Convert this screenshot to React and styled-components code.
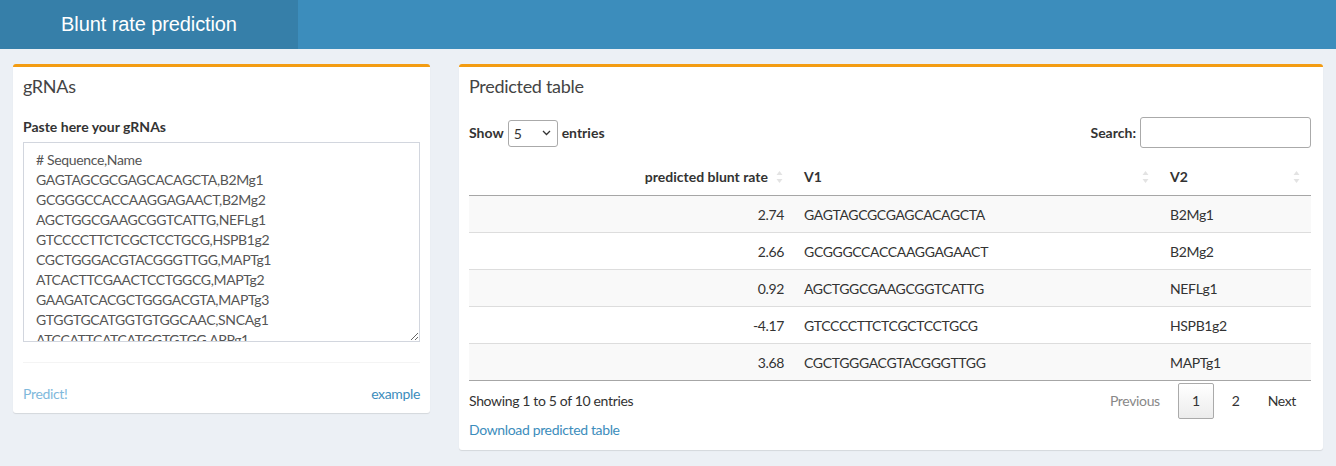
import React from 'react';
import styled, { createGlobalStyle } from 'styled-components';

const GlobalStyle = createGlobalStyle`
  html, body {
    margin: 0;
    padding: 0;
    background: #ecf0f5;
  }
  body {
    font-family: Lato, "Liberation Sans", sans-serif;
    font-size: 14px;
    letter-spacing: -0.35px;
    color: #333;
  }
  * {
    box-sizing: border-box;
  }
`;

const Page = styled.div`
  width: 1336px;
  min-height: 466px;
  background: #ecf0f5;
`;

const Header = styled.header`
  display: flex;
  height: 49px;
  background: #3c8dbc;
`;

const Logo = styled.div`
  width: 298px;
  background: #367fa9;
  color: #fff;
  font-family: "Liberation Sans", Arial, sans-serif;
  font-size: 20px;
  letter-spacing: -0.1px;
  line-height: 49px;
  text-align: center;
`;

const Content = styled.main`
  display: grid;
  grid-template-columns: 417px 1fr;
  gap: 29px;
  align-items: start;
  padding: 15px 13px;
`;

const Box = styled.section`
  background: #fff;
  border-top: 3px solid #f39c12;
  border-radius: 3px;
  box-shadow: 0 1px 1px rgba(0, 0, 0, 0.1);
`;

const BoxHeader = styled.div`
  padding: 10px;
`;

const BoxTitle = styled.h3`
  margin: 0;
  font-size: 18px;
  font-weight: 400;
  line-height: 19px;
  letter-spacing: -0.3px;
  color: #444;
`;

const BoxBody = styled.div`
  padding: 11px ${(p) => p.$right || 10}px ${(p) => p.$bottom ?? 10}px 10px;
`;

const Label = styled.label`
  display: block;
  font-weight: 700;
  letter-spacing: 0;
  line-height: 20px;
  margin-bottom: 5px;
`;

const TextArea = styled.textarea`
  display: block;
  width: 100%;
  height: 200px;
  padding: 7px 12px 6px;
  border: 1px solid #d2d6de;
  border-radius: 0;
  font-family: Lato, "Liberation Sans", sans-serif;
  font-size: 14px;
  letter-spacing: -0.35px;
  line-height: 20px;
  color: #555;
  overflow: hidden;
  resize: vertical;
  outline: none;
`;

const BoxFooter = styled.div`
  display: flex;
  justify-content: space-between;
  margin: 20px 10px 0;
  padding: 21px 0 9px;
  border-top: 1px solid #f4f4f4;
  line-height: 20px;
`;

const Link = styled.a`
  color: ${(p) => (p.$muted ? '#7fb9dc' : '#3c8dbc')};
  text-decoration: none;
  cursor: pointer;
`;

const Controls = styled.div`
  display: flex;
  justify-content: space-between;
  align-items: center;
  height: 31px;
`;

const Inline = styled.label`
  display: flex;
  align-items: center;
  gap: 4px;
  font-weight: 700;
  letter-spacing: 0;
`;

const Select = styled.div`
  display: flex;
  align-items: center;
  justify-content: space-between;
  width: 50px;
  height: 27px;
  padding: 0 6px 0 5px;
  border: 1px solid #aaa;
  border-radius: 3px;
  font-weight: 400;
  color: #333;
  margin-top: 1px;
`;

const SearchInput = styled.input`
  width: 171px;
  height: 31px;
  border: 1px solid #aaa;
  border-radius: 3px;
  padding: 0 6px;
  outline: none;
`;

const Table = styled.div`
  margin-top: 10px;
  display: grid;
  grid-template-columns: 325px 366px 1fr;
`;

const Th = styled.div`
  position: relative;
  height: 38px;
  display: flex;
  align-items: center;
  justify-content: ${(p) => (p.$right ? 'flex-end' : 'flex-start')};
  padding: 0 ${(p) => (p.$right ? 26 : 10)}px 0 10px;
  font-weight: 700;
  letter-spacing: 0;
  border-bottom: 1px solid #a6a6a6;
`;

const SortIcon = styled.svg`
  position: absolute;
  right: 11px;
  top: 12px;
`;

const Td = styled.div`
  height: 37px;
  display: flex;
  align-items: center;
  justify-content: ${(p) => (p.$right ? 'flex-end' : 'flex-start')};
  padding: 0 10px;
  background: ${(p) => (p.$odd ? '#f9f9f9' : '#fff')};
  border-bottom: 1px solid ${(p) => (p.$last ? '#a6a6a6' : '#ddd')};
`;

const InfoRow = styled.div`
  display: flex;
  justify-content: space-between;
  align-items: center;
  height: 39px;
`;

const Pager = styled.div`
  display: flex;
  align-items: center;
  margin-right: 5px;
`;

const PageBtn = styled.span`
  display: inline-flex;
  align-items: center;
  justify-content: center;
  height: 36px;
  min-width: ${(p) => (p.$current ? 36 : 0)}px;
  padding: 0 ${(p) => (p.$current ? 0 : 9)}px;
  margin-left: ${(p) => (p.$first ? 0 : 8)}px;
  color: ${(p) => (p.$disabled ? '#888' : '#333')};
  border: 1px solid ${(p) => (p.$current ? '#aaa' : 'transparent')};
  border-radius: 2px;
  background: ${(p) => (p.$current ? 'linear-gradient(#fff, #ececec)' : 'transparent')};
`;

const DownloadRow = styled.div`
  line-height: 20px;
`;

const Sort = () => (
  <SortIcon width="7" height="14" viewBox="0 0 7 14">
    <path d="M3.5 1 L6.5 5 L0.5 5 Z" fill="#e3e3e3" />
    <path d="M3.5 13 L6.5 9 L0.5 9 Z" fill="#e3e3e3" />
  </SortIcon>
);

const Chevron = () => (
  <svg width="9" height="6" viewBox="0 0 9 6">
    <path d="M1 1 L4.5 4.5 L8 1" fill="none" stroke="#333" strokeWidth="1.3" />
  </svg>
);

const gRNAs = `# Sequence,Name
GAGTAGCGCGAGCACAGCTA,B2Mg1
GCGGGCCACCAAGGAGAACT,B2Mg2
AGCTGGCGAAGCGGTCATTG,NEFLg1
GTCCCCTTCTCGCTCCTGCG,HSPB1g2
CGCTGGGACGTACGGGTTGG,MAPTg1
ATCACTTCGAACTCCTGGCG,MAPTg2
GAAGATCACGCTGGGACGTA,MAPTg3
GTGGTGCATGGTGTGGCAAC,SNCAg1
ATCCATTCATCATGGTGTGG,APPg1`;

const rows = [
  ['2.74', 'GAGTAGCGCGAGCACAGCTA', 'B2Mg1'],
  ['2.66', 'GCGGGCCACCAAGGAGAACT', 'B2Mg2'],
  ['0.92', 'AGCTGGCGAAGCGGTCATTG', 'NEFLg1'],
  ['-4.17', 'GTCCCCTTCTCGCTCCTGCG', 'HSPB1g2'],
  ['3.68', 'CGCTGGGACGTACGGGTTGG', 'MAPTg1'],
];

const App = () => (
  <Page>
    <GlobalStyle />
    <Header>
      <Logo>Blunt rate prediction</Logo>
    </Header>
    <Content>
      <Box>
        <BoxHeader>
          <BoxTitle>gRNAs</BoxTitle>
        </BoxHeader>
        <BoxBody $bottom={0}>
          <Label>Paste here your gRNAs</Label>
          <TextArea defaultValue={gRNAs} spellCheck={false} />
        </BoxBody>
        <BoxFooter>
          <Link $muted>Predict!</Link>
          <Link>example</Link>
        </BoxFooter>
      </Box>

      <Box>
        <BoxHeader>
          <BoxTitle>Predicted table</BoxTitle>
        </BoxHeader>
        <BoxBody $right={12}>
          <Controls>
            <Inline>
              Show
              <Select>
                5
                <Chevron />
              </Select>
              entries
            </Inline>
            <Inline>
              Search:
              <SearchInput />
            </Inline>
          </Controls>
          <Table>
            <Th $right>
              predicted blunt rate
              <Sort />
            </Th>
            <Th>
              V1
              <Sort />
            </Th>
            <Th>
              V2
              <Sort />
            </Th>
            {rows.map((r, i) => (
              <React.Fragment key={r[2]}>
                <Td $right $odd={i % 2 === 0} $last={i === rows.length - 1}>
                  {r[0]}
                </Td>
                <Td $odd={i % 2 === 0} $last={i === rows.length - 1}>
                  {r[1]}
                </Td>
                <Td $odd={i % 2 === 0} $last={i === rows.length - 1}>
                  {r[2]}
                </Td>
              </React.Fragment>
            ))}
          </Table>
          <InfoRow>
            <span>Showing 1 to 5 of 10 entries</span>
            <Pager>
              <PageBtn $first $disabled>Previous</PageBtn>
              <PageBtn $current>1</PageBtn>
              <PageBtn>2</PageBtn>
              <PageBtn>Next</PageBtn>
            </Pager>
          </InfoRow>
          <DownloadRow>
            <Link>Download predicted table</Link>
          </DownloadRow>
        </BoxBody>
      </Box>
    </Content>
  </Page>
);

export default App;
